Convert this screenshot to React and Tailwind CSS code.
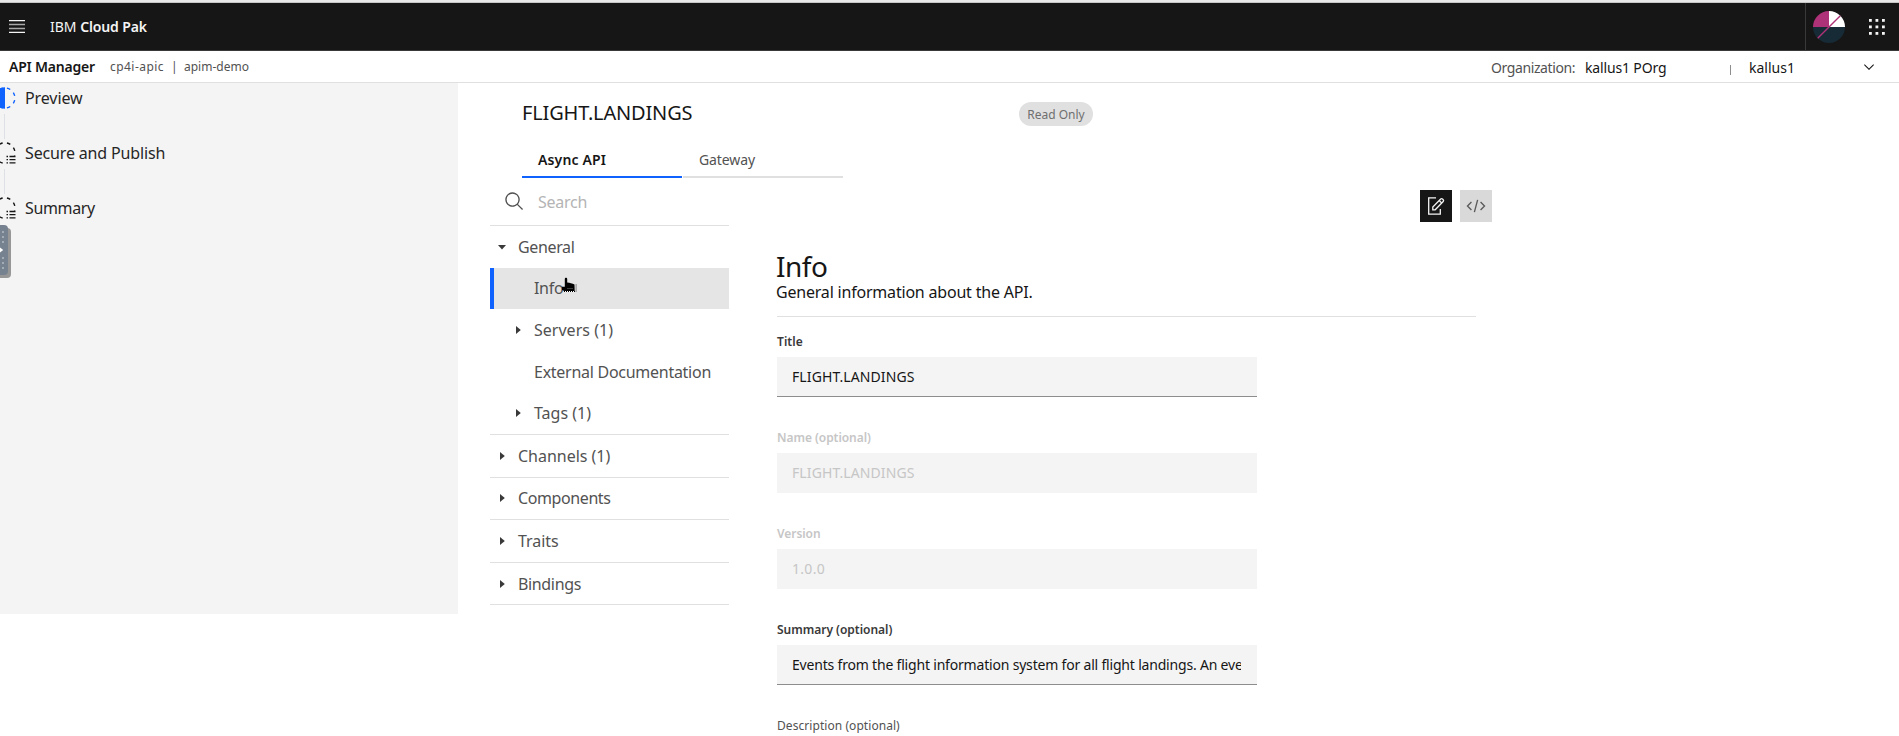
const Caret = ({ open }) => (
  <svg width="16" height="16" viewBox="0 0 16 16" fill="#393939" className="shrink-0">
    {open ? <path d="M4 6h8l-4 4.6z" /> : <path d="M6 4l4.8 4L6 12z" />}
  </svg>
);

const NAV = [
  { label: "General", open: true, track: "tracking-[-0.35px]", h: "h-[42px]" },
  { label: "Info", child: true, active: true, track: "tracking-[-0.3px]", h: "h-[41px]" },
  { label: "Servers (1)", child: true, caret: true, track: "tracking-[0.02px]", h: "h-[42px]" },
  { label: "External Documentation", child: true, track: "tracking-[-0.27px]", h: "h-[42px]" },
  { label: "Tags (1)", child: true, caret: true, track: "tracking-normal", h: "h-[42px] pb-px", rule: true },
  { label: "Channels (1)", track: "tracking-[-0.02px]", h: "h-[43px]", rule: true },
  { label: "Components", track: "tracking-[-0.4px]", h: "h-[42px] pb-px", rule: true },
  { label: "Traits", track: "tracking-[-0.05px]", h: "h-[43px]", rule: true },
  { label: "Bindings", track: "tracking-[-0.35px]", h: "h-[42px]", rule: true },
];

const NavRow = ({ label, open, child, active, caret, track, h, rule }) => (
  <li
    className={`flex items-center text-base text-[#525252] ${h} ${rule ? "border-b border-[#e0e0e0]" : ""} ${
      active ? "relative border-l-4 border-l-[#0f62fe] bg-[#e5e5e5] pb-px pl-[40px]" : child ? (caret ? "pl-[20px]" : "pl-[44px]") : "pl-1"
    }`}
  >
    {(!child || caret) && <Caret open={open} />}
    <span className={`${!child || caret ? "ml-2" : ""} whitespace-nowrap leading-6 ${track}`}>{label}</span>
    {active && <HandCursor />}
  </li>
);

const HandCursor = () => (
  <svg className="absolute left-[67px] top-[9px]" width="18" height="20" viewBox="0 0 18 20">
    <path d="M3.8 2c0-1.6 2.4-1.6 2.4 0v3.5l2 .2 1.7.6 1.9.4 1.7.7.2 6.6H3.3L1 13v-3.2h2.8z" fill="#000" />
    <path d="M6.5 11.500h6" stroke="#777" strokeWidth="1" strokeDasharray="1 1" />
    <path d="M3 14.500h12M14.500 7v8" stroke="#fff" strokeWidth="1" />
    <path d="M3 14.500h12v-8" stroke="#000" strokeWidth="1" strokeDasharray="1 1" fill="none" />
  </svg>
);

const Field = ({ label, value, disabled, labelTrack, track }) => (
  <div className="mt-[17px] mb-[33px] w-[480px]">
    <label className={`block text-xs leading-4 font-semibold ${labelTrack} ${disabled ? "text-[#c6c6c6]" : "text-[#393939]"}`}>{label}</label>
    <div
      className={`mt-[7px] flex h-10 items-center border-b bg-[#f4f4f4] pr-4 pl-[15px] text-sm ${
        disabled ? "border-[#f4f4f4] text-[#c6c6c6]" : "border-[#8d8d8d] text-[#161616]"
      }`}
    >
      <span className={`block w-full overflow-hidden whitespace-nowrap ${track}`}>{value}</span>
    </div>
  </div>
);

const PendingStep = () => (
  <svg width="17" height="24" viewBox="0 0 17 24" className="shrink-0">
    <circle cx="4.8" cy="12" r="10.2" fill="none" stroke="#161616" strokeWidth="1.4" strokeDasharray="3.6 4.4" strokeDashoffset="-2.2" pathLength="64" />
    <path d="M5.5 14.500H17V24H5.5z" fill="#f4f4f4" />
    <path d="M6.5 15.500h1.500m1.500 0h6M6.500 18.700h1.500m1.500 0h6M6.500 21.900h1.500m1.500 0h6" stroke="#161616" strokeWidth="1.3" />
  </svg>
);

const ActiveStep = () => (
  <svg width="17" height="24" viewBox="0 0 17 24" className="shrink-0">
    <path d="M5 1.300A10.700 10.700 0 0 0 5 22.700z" fill="#0f62fe" />
    <circle cx="4.8" cy="12" r="10.1" fill="none" stroke="#0f62fe" strokeWidth="1.4" strokeDasharray="3.6 4.4" strokeDashoffset="-2.2" pathLength="64" />
  </svg>
);

const Step = ({ icon, label, track, last }) => (
  <li className={`flex flex-col ${last ? "h-[32px]" : "h-[55px]"}`}>
    <div className="flex h-[26px] shrink-0 items-center">
      {icon}
      <span className={`ml-2 whitespace-nowrap text-base leading-6 text-[#262626] ${track}`}>{label}</span>
    </div>
    {!last && <div className="mt-[3px] ml-1 h-[25px] w-px bg-[#dde1e6]" />}
  </li>
);

const DOTS = [0, 6.5, 13];

export default function App() {
  return (
    <div className="flex h-[736px] w-[1899px] flex-col overflow-hidden bg-white font-['Noto_Sans',sans-serif] text-[#161616]">
      <div className="h-[3px] shrink-0 border-b border-[#c6c6c6] bg-[#e8e8e8]" />
      <header className="flex h-12 shrink-0 items-center border-b border-[#393939] bg-[#161616] text-sm text-[#f4f4f4]">
        <svg width="16" height="13" viewBox="0 0 16 13" className="ml-[9px]">
          <path d="M0 .6h16M0 12.4h16" stroke="#f4f4f4" strokeWidth="1.2" />
          <path d="M0 4.5h16M0 8.5h16" stroke="#a8a8a8" strokeWidth="1.3" />
        </svg>
        <span className="ml-[25px] tracking-[-0.1px]">IBM</span>
        <span className="ml-1 font-semibold tracking-[-0.15px]">Cloud Pak</span>
        <div className="ml-auto flex h-full items-center border-l border-[#393939]">
          <svg width="32" height="32" viewBox="0 0 32 32" className="ml-[7px]">
            <path d="M0 16A16 16 0 0 1 16 0v16z" fill="#ae3278" />
            <path d="M16 0a16 16 0 0 1 16 16H16z" fill="#fff" />
            <path d="M0 16a16 16 0 0 0 32 0z" fill="#172b36" />
            <path d="M4.7 27.3L27.3 4.7" stroke="#ae3278" strokeWidth="1.4" />
          </svg>
          <svg width="16" height="16" viewBox="0 0 16 16" fill="#f4f4f4" className="mr-[14px] ml-6">
            {DOTS.map((y) => DOTS.map((x) => <rect key={`${x}-${y}`} x={x} y={y} width="2.8" height="2.8" />))}
          </svg>
        </div>
      </header>

      <div className="flex h-8 shrink-0 items-center border-b border-[#e0e0e0]">
        <span className="ml-[9px] w-[101px] text-sm font-semibold whitespace-nowrap tracking-[-0.2px]">API Manager</span>
        <span className="w-[61px] text-xs tracking-[0.45px] text-[#525252]">cp4i-apic</span>
        <span className="w-[13px] text-xs text-[#525252]">|</span>
        <span className="text-xs tracking-normal text-[#525252]">apim-demo</span>
        <div className="mt-[2px] ml-auto flex items-center text-sm">
          <span className="w-[94px] tracking-[-0.4px] text-[#525252]">Organization:</span>
          <span className="w-[145px] tracking-[-0.15px]">kallus1 POrg</span>
          <span className="mt-1 h-[10px] w-px bg-[#8d8d8d]" />
          <span className="ml-[18px] w-[112px]">kallus1</span>
          <svg width="16" height="16" viewBox="0 0 16 16" fill="#161616" className="mr-[22px] mb-[2px]">
            <path d="M8 11L3 6l.7-.7L8 9.6l4.3-4.3.7.7z" />
          </svg>
        </div>
      </div>

      <div className="flex min-h-0 flex-1">
        <aside className="h-[531px] w-[458px] shrink-0 overflow-hidden bg-[#f4f4f4] pt-[2px]">
          <ol>
            <Step icon={<ActiveStep />} label="Preview" track="tracking-[-0.1px]" />
            <Step icon={<PendingStep />} label="Secure and Publish" track="tracking-[-0.15px]" />
            <Step icon={<PendingStep />} label="Summary" track="tracking-[-0.35px]" last />
          </ol>
          <svg width="11" height="53" viewBox="0 0 11 53" className="-mt-[2px] block">
            <path d="M0 3h7a4 4 0 0 1 4 4v42a4 4 0 0 1-4 4H0z" fill="#979797" />
            <path d="M0 0h4a4 4 0 0 1 4 4v42a4 4 0 0 1-4 4H0z" fill="#778290" />
            <path d="M2 6h2v2H2zM2 11h2v2H2zM2 16h2v2H2zM2 32h2v2H2zM2 37h2v2H2zM2 42h2v2H2z" fill="#a3abb5" />
            <path d="M0 22.5L3.2 25 0 27.5z" fill="#fff" />
          </svg>
        </aside>

        <main className="flex-1 pl-8">
          <div className="flex h-[58px] items-center pl-8">
            <h1 className="w-[497px] pt-[2px] text-xl tracking-[-0.17px]">FLIGHT.LANDINGS</h1>
            <span className="mt-1 flex h-6 w-[74px] items-center justify-center rounded-full bg-[#e0e0e0] pt-[2px] text-xs text-[#6f6f6f]">Read Only</span>
          </div>

          <div className="flex h-[37px] gap-px pl-8 text-sm">
            <div className="flex w-40 items-center border-b-2 border-[#0f62fe] pt-[2px] pl-4 font-semibold tracking-[0.15px]">Async API</div>
            <div className="flex w-40 items-center border-b-2 border-[#e0e0e0] pt-[2px] pl-4 tracking-[-0.1px] text-[#525252]">Gateway</div>
          </div>

          <div className="flex">
            <nav className="w-[239px] shrink-0">
              <div className="flex h-12 items-center border-b border-[#e0e0e0] pl-[14px]">
                <svg width="21" height="21" viewBox="0 0 32 32" fill="#525252">
                  <path d="M29,27.5859l-7.5521-7.5521a11.0177,11.0177,0,1,0-1.4141,1.4141L27.5859,29ZM4,13a9,9,0,1,1,9,9A9.01,9.01,0,0,1,4,13Z" />
                </svg>
                <span className="ml-[13px] text-base tracking-[-0.25px] text-[#b4b4b4]">Search</span>
              </div>
              <ul>
                {NAV.map((n) => (
                  <NavRow key={n.label} {...n} />
                ))}
              </ul>
            </nav>

            <section className="ml-12 w-[715px] pt-3">
              <div className="flex justify-end gap-2">
                <span className="flex size-8 items-center justify-center bg-[#161616]">
                  <svg width="20" height="20" viewBox="0 0 20 20" fill="none" stroke="#f4f4f4" strokeWidth="1.3">
                    <path d="M10 1.9H2.7v16.2h11.6V13" />
                    <path d="M6.8 13.8V11l7.9-8a1.3 1.3 0 0 1 1.8 0l.7.7a1.3 1.3 0 0 1 0 1.8l-8 8.3z" />
                    <path d="M13.2 4.5l2.5 2.5" />
                  </svg>
                </span>
                <span className="flex size-8 items-center justify-center bg-[#d9d9d9]">
                  <svg width="20" height="20" viewBox="0 0 32 32" fill="none" stroke="#5a5a5a" strokeWidth="2.2">
                    <path d="M23.3 9.7L29.6 16l-6.3 6.3M8.7 9.7L2.4 16l6.3 6.3M18.6 6.3l-5.2 19.4" />
                  </svg>
                </span>
              </div>
              <div className="mt-[30px] w-[699px] border-b border-[#e0e0e0] pb-3">
                <h2 className="-ml-px text-[28px] leading-7 tracking-[-0.5px]">Info</h2>
                <p className="-ml-px text-base leading-6 tracking-[-0.2px]">General information about the API.</p>
              </div>
              <Field label="Title" value="FLIGHT.LANDINGS" labelTrack="tracking-[0.05px]" track="tracking-[0.1px]" />
              <Field label="Name (optional)" value="FLIGHT.LANDINGS" disabled labelTrack="tracking-[-0.05px]" track="tracking-[0.1px]" />
              <Field label="Version" value="1.0.0" disabled labelTrack="tracking-[-0.05px]" track="tracking-[0.3px]" />
              <Field
                label="Summary (optional)"
                value="Events from the flight information system for all flight landings. An event"
                labelTrack="tracking-[-0.02px]"
                track="tracking-[-0.19px]"
              />
              <p className="mt-[33px] text-xs leading-4 tracking-[0.06px] text-[#525252]">Description (optional)</p>
            </section>
          </div>
        </main>
      </div>
    </div>
  );
}
